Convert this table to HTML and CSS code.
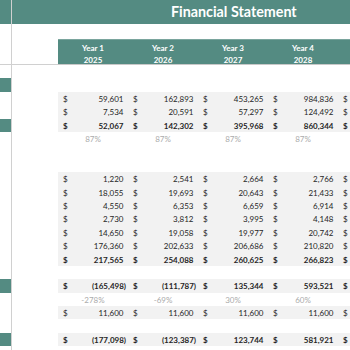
FILE: index.html
```html
<!DOCTYPE html>
<html>
<head>
<meta charset="utf-8">
<link rel="stylesheet" href="styles.css">
</head>
<body>
<div class="sheet">
  <div class="row title-row"><div class="mark on"></div><div class="title">Financial Statement</div></div>
  <div class="row spacer"><div class="mark"></div></div>
  <div class="row head">
    <div class="mark"></div><div class="pad"></div>
    <div class="cells">
      <div class="hcell"><span>Year 1</span><span>2025</span></div>
      <div class="hcell"><span>Year 2</span><span>2026</span></div>
      <div class="hcell"><span>Year 3</span><span>2027</span></div>
      <div class="hcell"><span>Year 4</span><span>2028</span></div>
      <div class="hcell last"></div>
    </div>
  </div>
  <div class="row"><div class="mark"></div></div>
  <div class="row"><div class="mark on"></div></div>

  <div class="row data"><div class="mark"></div><div class="pad"></div><div class="cells">
    <div class="cell"><span>$</span><span class="pos">59,601</span></div>
    <div class="cell"><span>$</span><span class="pos">162,893</span></div>
    <div class="cell"><span>$</span><span class="pos">453,265</span></div>
    <div class="cell"><span>$</span><span class="pos">984,836</span></div>
    <div class="cell last"><span>$</span></div>
  </div></div>
  <div class="row data"><div class="mark"></div><div class="pad"></div><div class="cells">
    <div class="cell"><span>$</span><span class="pos">7,534</span></div>
    <div class="cell"><span>$</span><span class="pos">20,591</span></div>
    <div class="cell"><span>$</span><span class="pos">57,297</span></div>
    <div class="cell"><span>$</span><span class="pos">124,492</span></div>
    <div class="cell last"><span>$</span></div>
  </div></div>
  <div class="row data bold"><div class="mark on"></div><div class="pad"></div><div class="cells">
    <div class="cell"><span>$</span><span class="pos">52,067</span></div>
    <div class="cell"><span>$</span><span class="pos">142,302</span></div>
    <div class="cell"><span>$</span><span class="pos">395,968</span></div>
    <div class="cell"><span>$</span><span class="pos">860,344</span></div>
    <div class="cell last"><span>$</span></div>
  </div></div>
  <div class="row pct"><div class="mark"></div><div class="pad"></div><div class="cells">
    <div class="pcell">87%</div><div class="pcell">87%</div><div class="pcell">87%</div><div class="pcell">87%</div>
  </div></div>
  <div class="row"><div class="mark"></div></div>
  <div class="row"><div class="mark"></div></div>

  <div class="row data"><div class="mark"></div><div class="pad"></div><div class="cells">
    <div class="cell"><span>$</span><span class="pos">1,220</span></div>
    <div class="cell"><span>$</span><span class="pos">2,541</span></div>
    <div class="cell"><span>$</span><span class="pos">2,664</span></div>
    <div class="cell"><span>$</span><span class="pos">2,766</span></div>
    <div class="cell last"><span>$</span></div>
  </div></div>
  <div class="row data"><div class="mark"></div><div class="pad"></div><div class="cells">
    <div class="cell"><span>$</span><span class="pos">18,055</span></div>
    <div class="cell"><span>$</span><span class="pos">19,693</span></div>
    <div class="cell"><span>$</span><span class="pos">20,643</span></div>
    <div class="cell"><span>$</span><span class="pos">21,433</span></div>
    <div class="cell last"><span>$</span></div>
  </div></div>
  <div class="row data"><div class="mark"></div><div class="pad"></div><div class="cells">
    <div class="cell"><span>$</span><span class="pos">4,550</span></div>
    <div class="cell"><span>$</span><span class="pos">6,353</span></div>
    <div class="cell"><span>$</span><span class="pos">6,659</span></div>
    <div class="cell"><span>$</span><span class="pos">6,914</span></div>
    <div class="cell last"><span>$</span></div>
  </div></div>
  <div class="row data"><div class="mark"></div><div class="pad"></div><div class="cells">
    <div class="cell"><span>$</span><span class="pos">2,730</span></div>
    <div class="cell"><span>$</span><span class="pos">3,812</span></div>
    <div class="cell"><span>$</span><span class="pos">3,995</span></div>
    <div class="cell"><span>$</span><span class="pos">4,148</span></div>
    <div class="cell last"><span>$</span></div>
  </div></div>
  <div class="row data"><div class="mark"></div><div class="pad"></div><div class="cells">
    <div class="cell"><span>$</span><span class="pos">14,650</span></div>
    <div class="cell"><span>$</span><span class="pos">19,058</span></div>
    <div class="cell"><span>$</span><span class="pos">19,977</span></div>
    <div class="cell"><span>$</span><span class="pos">20,742</span></div>
    <div class="cell last"><span>$</span></div>
  </div></div>
  <div class="row data"><div class="mark"></div><div class="pad"></div><div class="cells">
    <div class="cell"><span>$</span><span class="pos">176,360</span></div>
    <div class="cell"><span>$</span><span class="pos">202,633</span></div>
    <div class="cell"><span>$</span><span class="pos">206,686</span></div>
    <div class="cell"><span>$</span><span class="pos">210,820</span></div>
    <div class="cell last"><span>$</span></div>
  </div></div>
  <div class="row data bold"><div class="mark"></div><div class="pad"></div><div class="cells">
    <div class="cell"><span>$</span><span class="pos">217,565</span></div>
    <div class="cell"><span>$</span><span class="pos">254,088</span></div>
    <div class="cell"><span>$</span><span class="pos">260,625</span></div>
    <div class="cell"><span>$</span><span class="pos">266,823</span></div>
    <div class="cell last"><span>$</span></div>
  </div></div>
  <div class="row"><div class="mark"></div></div>
  <div class="row data bold"><div class="mark on"></div><div class="pad"></div><div class="cells">
    <div class="cell"><span>$</span><span>(165,498)</span></div>
    <div class="cell"><span>$</span><span>(111,787)</span></div>
    <div class="cell"><span>$</span><span class="pos">135,344</span></div>
    <div class="cell"><span>$</span><span class="pos">593,521</span></div>
    <div class="cell last"><span>$</span></div>
  </div></div>
  <div class="row pct"><div class="mark"></div><div class="pad"></div><div class="cells">
    <div class="pcell">-278%</div><div class="pcell">-69%</div><div class="pcell">30%</div><div class="pcell">60%</div>
  </div></div>
  <div class="row data"><div class="mark"></div><div class="pad"></div><div class="cells">
    <div class="cell"><span>$</span><span class="pos">11,600</span></div>
    <div class="cell"><span>$</span><span class="pos">11,600</span></div>
    <div class="cell"><span>$</span><span class="pos">11,600</span></div>
    <div class="cell"><span>$</span><span class="pos">11,600</span></div>
    <div class="cell last"><span>$</span></div>
  </div></div>
  <div class="row"><div class="mark"></div></div>
  <div class="row data bold"><div class="mark on"></div><div class="pad"></div><div class="cells">
    <div class="cell"><span>$</span><span>(177,098)</span></div>
    <div class="cell"><span>$</span><span>(123,387)</span></div>
    <div class="cell"><span>$</span><span class="pos">123,744</span></div>
    <div class="cell"><span>$</span><span class="pos">581,921</span></div>
    <div class="cell last"><span>$</span></div>
  </div></div>
  <div class="row"><div class="mark"></div></div>
</div>
</body>
</html>
```

FILE: styles.css
```css
html, body {
  margin: 0;
  padding: 0;
  background: #ffffff;
}
body {
  width: 350px;
  height: 350px;
  overflow: hidden;
  font-family: Lato, "Liberation Sans", sans-serif;
  color: #262626;
}
.sheet {
  display: flex;
  flex-direction: column;
  width: 350px;
}
.row {
  display: flex;
  height: 13.4px;
  flex: none;
}
.mark {
  width: 11px;
  flex: none;
  border-right: 1px solid #d0d0d0;
}
.mark.on {
  background: #548b82;
}
.pad {
  width: 46px;
  flex: none;
}
.cells {
  display: flex;
  flex: none;
}
.title-row {
  height: 24px;
}
.title {
  flex: 1;
  background: #548b82;
  color: #ffffff;
  font-weight: 700;
  font-size: 14.3px;
  line-height: 24px;
  padding-left: 159px;
  white-space: nowrap;
}
.spacer {
  height: 15px;
}
.head {
  height: 26px;
}
.head .mark,
.head .pad {
  border-bottom: 1px solid #d0d0d0;
}
.head .cells {
  background: #548b82;
  border-top: 1px solid #7aa59d;
  border-bottom: 1px solid #c8c8c8;
}
.hcell {
  width: 70px;
  flex: none;
  display: flex;
  flex-direction: column;
  align-items: center;
  color: #ffffff;
  font-weight: 700;
  font-size: 8px;
  line-height: 12px;
  padding-top: 2px;
  box-sizing: border-box;
}
.cell {
  width: 70px;
  flex: none;
  box-sizing: border-box;
  display: flex;
  justify-content: space-between;
  align-items: center;
  padding: 1px 2px 0 5px;
  font-size: 8px;
  white-space: nowrap;
}
.hcell.last,
.cell.last {
  width: 12px;
}
.cell .pos {
  padding-right: 2.5px;
}
.data .cells {
  background: #f2f2f2;
}
.bold .cell {
  font-weight: 700;
}
.pcell {
  width: 70px;
  flex: none;
  display: flex;
  align-items: center;
  justify-content: center;
  padding-top: 1px;
  font-size: 8px;
  color: #ababab;
}
```
